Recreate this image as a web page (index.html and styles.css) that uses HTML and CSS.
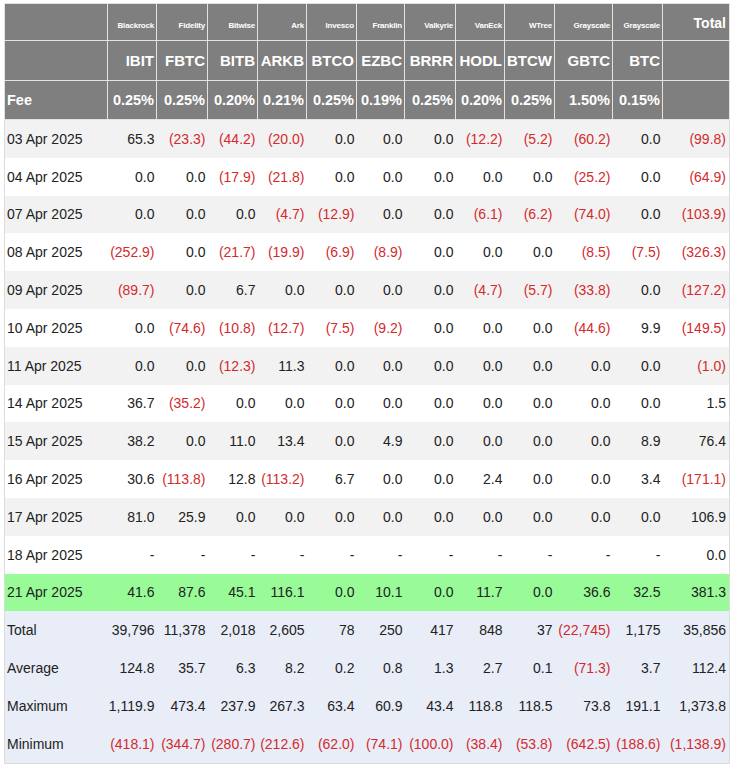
FILE: index.html
```html
<!DOCTYPE html>
<html>
<head>
<meta charset="utf-8">
<link rel="stylesheet" href="styles.css">
</head>
<body>
<div class="wrap">
<table class="flows">
<colgroup>
<col class="c-date"><col class="c49"><col class="c51"><col class="c50"><col class="c49"><col class="c50"><col class="c48"><col class="c51"><col class="c49"><col class="c50"><col class="c58"><col class="c50"><col class="c-total">
</colgroup>
<thead>
<tr class="h-issuer">
<th></th><th>Blackrock</th><th>Fidelity</th><th>Bitwise</th><th>Ark</th><th>Invesco</th><th>Franklin</th><th>Valkyrie</th><th>VanEck</th><th>WTree</th><th>Grayscale</th><th>Grayscale</th><th class="h-total">Total</th>
</tr>
<tr class="h-ticker">
<th></th><th>IBIT</th><th>FBTC</th><th>BITB</th><th>ARKB</th><th>BTCO</th><th>EZBC</th><th>BRRR</th><th>HODL</th><th>BTCW</th><th>GBTC</th><th>BTC</th><th></th>
</tr>
<tr class="h-fee">
<th class="lbl">Fee</th><th>0.25%</th><th>0.25%</th><th>0.20%</th><th>0.21%</th><th>0.25%</th><th>0.19%</th><th>0.25%</th><th>0.20%</th><th>0.25%</th><th>1.50%</th><th>0.15%</th><th></th>
</tr>
</thead>
<tbody>
<tr class="odd"><td>03 Apr 2025</td><td>65.3</td><td class="neg">(23.3)</td><td class="neg">(44.2)</td><td class="neg">(20.0)</td><td>0.0</td><td>0.0</td><td>0.0</td><td class="neg">(12.2)</td><td class="neg">(5.2)</td><td class="neg">(60.2)</td><td>0.0</td><td class="neg">(99.8)</td></tr>
<tr><td>04 Apr 2025</td><td>0.0</td><td>0.0</td><td class="neg">(17.9)</td><td class="neg">(21.8)</td><td>0.0</td><td>0.0</td><td>0.0</td><td>0.0</td><td>0.0</td><td class="neg">(25.2)</td><td>0.0</td><td class="neg">(64.9)</td></tr>
<tr class="odd"><td>07 Apr 2025</td><td>0.0</td><td>0.0</td><td>0.0</td><td class="neg">(4.7)</td><td class="neg">(12.9)</td><td>0.0</td><td>0.0</td><td class="neg">(6.1)</td><td class="neg">(6.2)</td><td class="neg">(74.0)</td><td>0.0</td><td class="neg">(103.9)</td></tr>
<tr><td>08 Apr 2025</td><td class="neg">(252.9)</td><td>0.0</td><td class="neg">(21.7)</td><td class="neg">(19.9)</td><td class="neg">(6.9)</td><td class="neg">(8.9)</td><td>0.0</td><td>0.0</td><td>0.0</td><td class="neg">(8.5)</td><td class="neg">(7.5)</td><td class="neg">(326.3)</td></tr>
<tr class="odd"><td>09 Apr 2025</td><td class="neg">(89.7)</td><td>0.0</td><td>6.7</td><td>0.0</td><td>0.0</td><td>0.0</td><td>0.0</td><td class="neg">(4.7)</td><td class="neg">(5.7)</td><td class="neg">(33.8)</td><td>0.0</td><td class="neg">(127.2)</td></tr>
<tr><td>10 Apr 2025</td><td>0.0</td><td class="neg">(74.6)</td><td class="neg">(10.8)</td><td class="neg">(12.7)</td><td class="neg">(7.5)</td><td class="neg">(9.2)</td><td>0.0</td><td>0.0</td><td>0.0</td><td class="neg">(44.6)</td><td>9.9</td><td class="neg">(149.5)</td></tr>
<tr class="odd"><td>11 Apr 2025</td><td>0.0</td><td>0.0</td><td class="neg">(12.3)</td><td>11.3</td><td>0.0</td><td>0.0</td><td>0.0</td><td>0.0</td><td>0.0</td><td>0.0</td><td>0.0</td><td class="neg">(1.0)</td></tr>
<tr><td>14 Apr 2025</td><td>36.7</td><td class="neg">(35.2)</td><td>0.0</td><td>0.0</td><td>0.0</td><td>0.0</td><td>0.0</td><td>0.0</td><td>0.0</td><td>0.0</td><td>0.0</td><td>1.5</td></tr>
<tr class="odd"><td>15 Apr 2025</td><td>38.2</td><td>0.0</td><td>11.0</td><td>13.4</td><td>0.0</td><td>4.9</td><td>0.0</td><td>0.0</td><td>0.0</td><td>0.0</td><td>8.9</td><td>76.4</td></tr>
<tr><td>16 Apr 2025</td><td>30.6</td><td class="neg">(113.8)</td><td>12.8</td><td class="neg">(113.2)</td><td>6.7</td><td>0.0</td><td>0.0</td><td>2.4</td><td>0.0</td><td>0.0</td><td>3.4</td><td class="neg">(171.1)</td></tr>
<tr class="odd"><td>17 Apr 2025</td><td>81.0</td><td>25.9</td><td>0.0</td><td>0.0</td><td>0.0</td><td>0.0</td><td>0.0</td><td>0.0</td><td>0.0</td><td>0.0</td><td>0.0</td><td>106.9</td></tr>
<tr><td>18 Apr 2025</td><td>-</td><td>-</td><td>-</td><td>-</td><td>-</td><td>-</td><td>-</td><td>-</td><td>-</td><td>-</td><td>-</td><td>0.0</td></tr>
<tr class="latest"><td>21 Apr 2025</td><td>41.6</td><td>87.6</td><td>45.1</td><td>116.1</td><td>0.0</td><td>10.1</td><td>0.0</td><td>11.7</td><td>0.0</td><td>36.6</td><td>32.5</td><td>381.3</td></tr>
<tr class="stat"><td>Total</td><td>39,796</td><td>11,378</td><td>2,018</td><td>2,605</td><td>78</td><td>250</td><td>417</td><td>848</td><td>37</td><td class="neg">(22,745)</td><td>1,175</td><td>35,856</td></tr>
<tr class="stat"><td>Average</td><td>124.8</td><td>35.7</td><td>6.3</td><td>8.2</td><td>0.2</td><td>0.8</td><td>1.3</td><td>2.7</td><td>0.1</td><td class="neg">(71.3)</td><td>3.7</td><td>112.4</td></tr>
<tr class="stat"><td>Maximum</td><td>1,119.9</td><td>473.4</td><td>237.9</td><td>267.3</td><td>63.4</td><td>60.9</td><td>43.4</td><td>118.8</td><td>118.5</td><td>73.8</td><td>191.1</td><td>1,373.8</td></tr>
<tr class="stat"><td>Minimum</td><td class="neg">(418.1)</td><td class="neg">(344.7)</td><td class="neg">(280.7)</td><td class="neg">(212.6)</td><td class="neg">(62.0)</td><td class="neg">(74.1)</td><td class="neg">(100.0)</td><td class="neg">(38.4)</td><td class="neg">(53.8)</td><td class="neg">(642.5)</td><td class="neg">(188.6)</td><td class="neg">(1,138.9)</td></tr>
</tbody>
</table>
</div>
</body>
</html>
```

FILE: styles.css
```css
html, body {
  margin: 0;
  padding: 0;
  background: #ffffff;
}
.wrap {
  padding: 3px 0 0 4px;
}
.flows {
  width: 725px;
  table-layout: fixed;
  border-collapse: collapse;
  border: 1px solid #dcdcdc;
  font-family: "Liberation Sans", Arial, sans-serif;
  font-size: 14px;
  color: #222222;
}
.c-date { width: 103px; }
.c48 { width: 48px; }
.c49 { width: 49px; }
.c50 { width: 50px; }
.c51 { width: 51px; }
.c58 { width: 58px; }
.c-total { width: 67px; }

.flows th {
  background: #7f7f7f;
  color: #ffffff;
  font-weight: bold;
  text-align: right;
  border: 1px solid #e2e2e2;
  padding: 0 2px 0 1px;
  white-space: nowrap;
  overflow: hidden;
}
.h-issuer th {
  height: 37px;
  font-size: 8px;
  letter-spacing: -0.2px;
  vertical-align: baseline;
  padding-top: 11px;
  box-sizing: border-box;
}
.h-issuer th.h-total {
  font-size: 14px;
  letter-spacing: 0;
  padding-right: 3px;
}
.h-ticker th {
  height: 39px;
  font-size: 15px;
  vertical-align: middle;
}
.h-fee th {
  height: 38px;
  font-size: 14.5px;
  vertical-align: middle;
}
.h-fee th.lbl {
  text-align: left;
  padding-left: 2px;
}
.flows td {
  height: 37.8px;
  padding: 0 2px 0 1px;
  text-align: right;
  vertical-align: middle;
  white-space: nowrap;
  border: none;
}
.flows td:first-child {
  text-align: left;
  padding-left: 2px;
}
.flows td:last-child {
  padding-right: 3px;
}
.flows tbody tr { background: #ffffff; }
.flows tbody tr.odd { background: #f2f2f2; }
.flows tbody tr.latest { background: #98fb98; }
.flows tbody tr.stat { background: #e9edf7; }
.neg { color: #d42a2e; }
```
